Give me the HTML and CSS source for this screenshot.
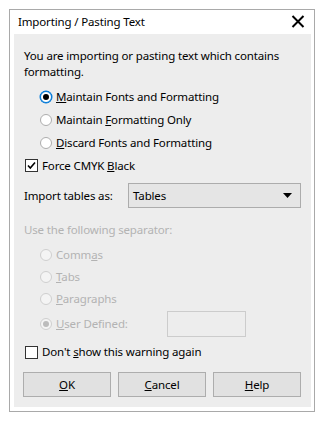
FILE: index.html
```html
<!DOCTYPE html>
<html>
<head>
<meta charset="utf-8">
<link rel="stylesheet" href="styles.css">
</head>
<body>
<div class="window">
  <div class="titlebar">
    <span class="title">Importing / Pasting Text</span>
    <svg class="close" width="14" height="13" viewBox="0 0 14 13"><path d="M1.5 1 L12.5 12 M12.5 1 L1.5 12" stroke="#000" stroke-width="2" fill="none"/></svg>
  </div>
  <div class="content">
    <p class="intro">You are importing or pasting text which contains formatting.</p>
    <div class="group">
      <div class="row"><span class="radio checked focus"></span><span><u>M</u>aintain Fonts and Formatting</span></div>
      <div class="row"><span class="radio"></span><span>Maintain <u>F</u>ormatting Only</span></div>
      <div class="row"><span class="radio"></span><span><u>D</u>iscard Fonts and Formatting</span></div>
    </div>
    <div class="row check-row"><span class="checkbox"><svg width="11" height="11" viewBox="0 0 11 11"><path d="M2 5.5 L4.3 8 L9 2.5" stroke="#000" stroke-width="1.6" fill="none"/></svg></span><span>Force CMYK <u>B</u>lack</span></div>
    <div class="select-row">
      <span class="label">Import tables as:</span>
      <div class="select"><span>Tables</span><svg width="9" height="5" viewBox="0 0 9 5"><path d="M0 0 H9 L4.5 5 Z" fill="#000"/></svg></div>
    </div>
    <div class="disabled">
      <p class="sep-label">Use the following separator:</p>
      <div class="group sep">
        <div class="row"><span class="radio"></span><span>Comm<u>a</u>s</span></div>
        <div class="row"><span class="radio"></span><span><u>T</u>abs</span></div>
        <div class="row"><span class="radio"></span><span><u>P</u>aragraphs</span></div>
        <div class="row user"><span class="radio checked"></span><span class="user-label"><u>U</u>ser Defined:</span><span class="input"></span></div>
      </div>
    </div>
    <div class="row check-row warn"><span class="checkbox"></span><span>Don't <u>s</u>how this warning again</span></div>
    <div class="buttons">
      <button class="btn"><u>O</u>K</button>
      <button class="btn"><u>C</u>ancel</button>
      <button class="btn"><u>H</u>elp</button>
    </div>
  </div>
</div>
</body>
</html>
```
FILE: styles.css
```css
* { box-sizing: border-box; }
html, body { margin: 0; padding: 0; background: #fff; }
body {
  font-family: "Noto Sans", "Open Sans", sans-serif;
  font-size: 11.5px;
  letter-spacing: -0.15px;
  color: #000;
  padding: 9px 9px 0 9px;
}
.window {
  width: 306px;
  height: 403px;
  border: 1px solid #a9a9a9;
  background: #fff;
  display: flex;
  flex-direction: column;
}
.titlebar {
  height: 24px;
  display: flex;
  align-items: center;
  justify-content: space-between;
  padding: 0 9px 0 8px;
}
.title { line-height: 16px; }
.close { display: block; margin-top: -1px; }
.content {
  flex: 1;
  margin: 0 3px 4px 4px;
  background: #ededed;
  padding: 14px 10px 0 10px;
  display: flex;
  flex-direction: column;
}
p { margin: 0; }
.intro { line-height: 16px; }
.group { margin-top: 5px; padding-left: 16px; }
.row {
  height: 23px;
  display: flex;
  align-items: center;
  line-height: 16px;
}
.radio {
  width: 12px;
  height: 12px;
  border-radius: 50%;
  border: 1px solid #adadad;
  background: #fff;
  margin-right: 4px;
  flex: none;
  position: relative;
}
.radio.checked::after {
  content: "";
  position: absolute;
  left: 2px; top: 2px;
  width: 6px; height: 6px;
  border-radius: 50%;
  background: #000;
}
.radio.focus { border: 1px solid #0078d7; box-shadow: 0 0 0 0.5px #0078d7; }
.check-row { padding-left: 1px; }
.checkbox {
  width: 13px;
  height: 13px;
  border: 1px solid #333;
  background: #fff;
  margin-right: 4px;
  flex: none;
  display: flex;
  align-items: center;
  justify-content: center;
}
.checkbox svg { display: block; }
.select-row {
  margin-top: 6px;
  height: 25px;
  display: flex;
  align-items: center;
}
.label { width: 104px; flex: none; }
.select {
  flex: 1;
  height: 25px;
  border: 1px solid #acacac;
  background: #e5e5e5;
  display: flex;
  align-items: center;
  justify-content: space-between;
  padding: 0 8px 0 4px;
}
.select svg { display: block; }
.disabled { color: #b3b3b3; }
.sep-label { margin-top: 14px; line-height: 16px; }
.sep { margin-top: 6px; }
.sep .row { height: 22px; }
.disabled .radio { border-color: #cfcfcf; background: #f4f4f4; }
.disabled .radio.checked::after { background: #bcbcbc; }
.sep .row.user { height: 26px; margin-top: 1px; }
.user-label { width: 111px; }
.input {
  width: 79px;
  height: 26px;
  border: 1px solid #cccccc;
  background: #ededed;
}
.warn { margin-top: 4px; height: 22px; }
.buttons {
  margin-top: 9px;
  margin-left: -1px;
  display: flex;
  gap: 7px;
}
.btn {
  width: 88px;
  height: 25px;
  border: 1px solid #adadad;
  background: #e1e1e1;
  font-family: inherit;
  font-size: inherit;
  letter-spacing: inherit;
  color: #000;
  padding: 0;
}
```
